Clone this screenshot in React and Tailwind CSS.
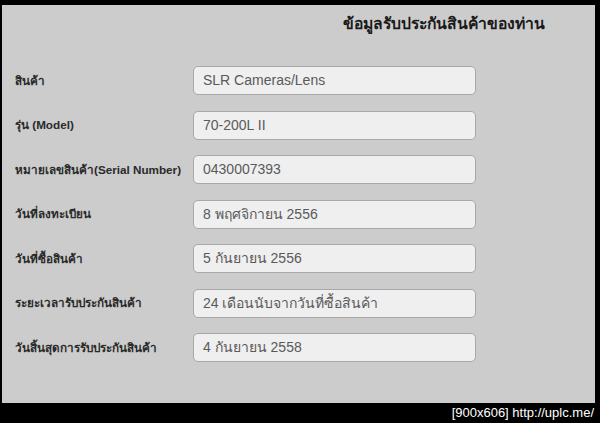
import React from "react";

const fields = [
  { label: "สินค้า", value: "SLR Cameras/Lens" },
  { label: "รุ่น (Model)", value: "70-200L II" },
  { label: "หมายเลขสินค้า(Serial Number)", value: "0430007393" },
  { label: "วันที่ลงทะเบียน", value: "8 พฤศจิกายน 2556" },
  { label: "วันที่ซื้อสินค้า", value: "5 กันยายน 2556" },
  { label: "ระยะเวลารับประกันสินค้า", value: "24 เดือนนับจากวันที่ซื้อสินค้า" },
  { label: "วันสิ้นสุดการรับประกันสินค้า", value: "4 กันยายน 2558" },
];

const App = () => {
  return (
    <div
      className="w-[600px] h-[423px] bg-black flex flex-col"
      style={{ fontFamily: "Tahoma, 'Liberation Sans', 'Noto Sans', sans-serif" }}
    >
      {/* panel */}
      <div className="mt-[5px] ml-[2px] w-[593px] h-[398px] bg-[#cccccc] flex flex-col">
        <div className="h-[36px] flex items-center justify-end pr-[50px] pt-[2px]">
          <h1 className="text-[15.7px] font-bold text-[#1a1a1a]">
            ข้อมูลรับประกันสินค้าของท่าน
          </h1>
        </div>

        <div className="mt-[25px] pl-[13px] flex flex-col gap-[15.5px]">
          {fields.map((f, i) => (
            <div key={i} className="flex items-center">
              <label className="w-[178px] text-[11.7px] font-bold text-[#2a2a2a]">
                {f.label}
              </label>
              <div className="w-[283px] h-[29px] rounded-[5px] border border-[#a8a8a8] bg-[#efefef] flex items-center pl-[9px] text-[14px] text-[#5a5a5a]">
                {f.value}
              </div>
            </div>
          ))}
        </div>
      </div>

      {/* bottom watermark bar */}
      <div className="flex-1 flex items-center justify-end pr-[6px] text-white text-[13px]">
        [900x606] http://uplc.me/
      </div>
    </div>
  );
};

export default App;
